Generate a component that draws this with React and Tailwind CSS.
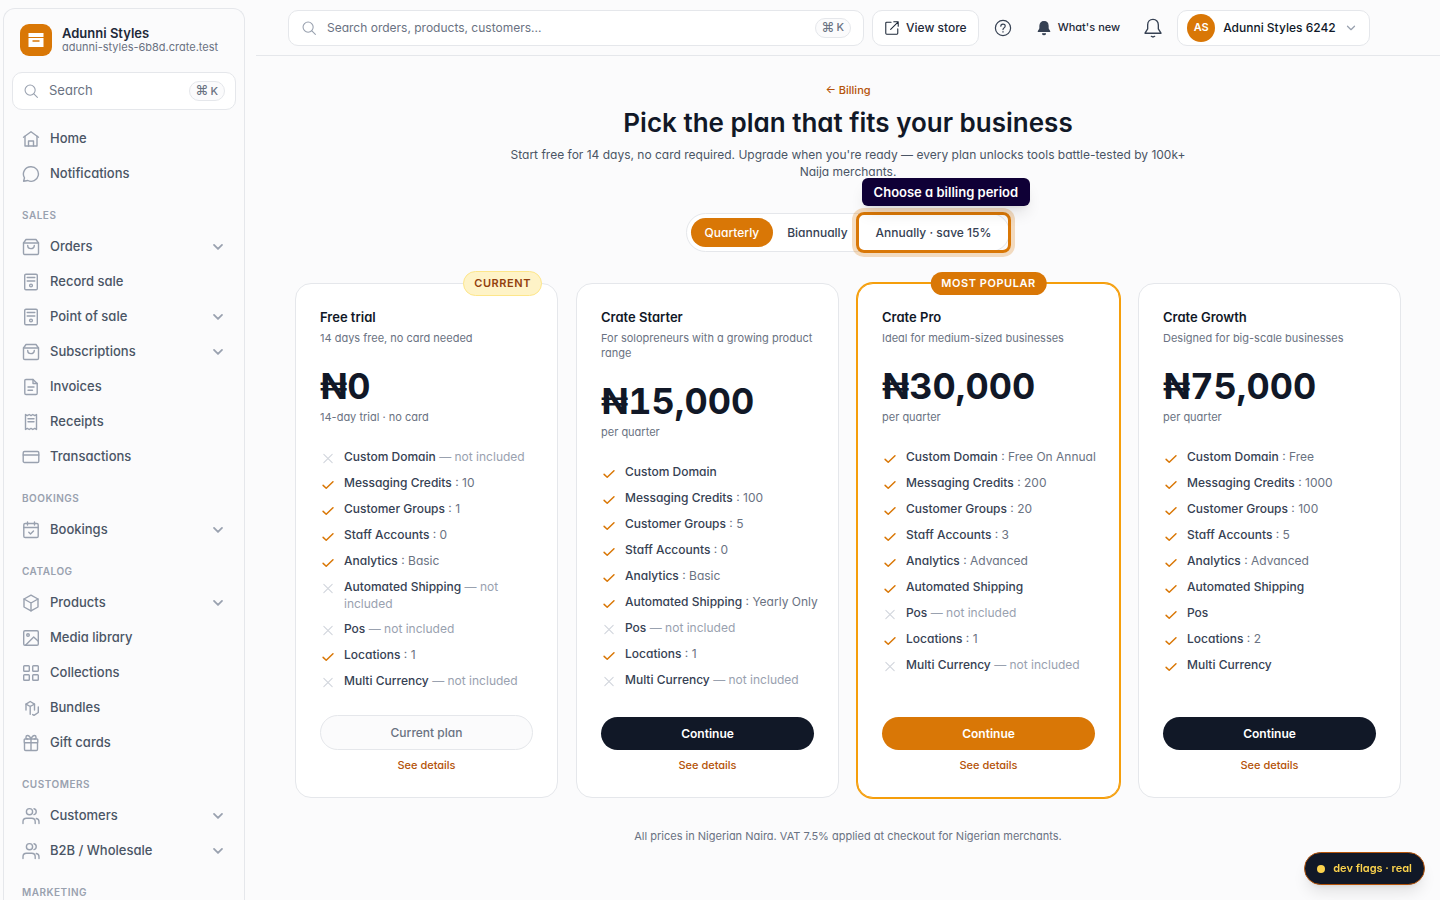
import React, { useState } from 'react'

const paths = {
  home: (
    <>
      <path d="M1.500 7.200 9 1.800l7.500 5.400" />
      <path d="M3 6.200v9.800h12V6.200" />
      <path d="M6.500 16v-5h5v5" />
    </>
  ),
  chat: <path d="M9 1.700a7.300 7.300 0 1 1-3.200 13.800L1.600 16.200l.9-3.400A7.300 7.300 0 0 1 9 1.700Z" />,
  bag: (
    <>
      <path d="M1.500 5v10.200c0 .8.600 1.300 1.300 1.300h12.400c.7 0 1.300-.5 1.300-1.300V5L14 1.500H4L1.500 5Z" />
      <path d="M1.500 5h15" />
      <path d="M5.700 7.500c0 4.200 6.600 4.200 6.600 0" />
    </>
  ),
  pos: (
    <>
      <rect x="2.700" y="1.200" width="12.600" height="15.600" rx="1.300" />
      <path d="M5.200 4.500h7.600M5.200 8h7.600" />
      <circle cx="9" cy="12.500" r="1.400" />
    </>
  ),
  invoice: (
    <>
      <path d="M11 1.500H4c-.7 0-1.200.5-1.200 1.200v12.600c0 .7.500 1.200 1.200 1.200h10c.7 0 1.200-.5 1.200-1.200V5.500L11 1.500Z" />
      <path d="M11 1.500v4h4.200M6 9h6M6 12.200h4.500" />
    </>
  ),
  receipt: (
    <>
      <path d="M3.500 1.500 5.300 2.600 7.200 1.500 9 2.600l1.800-1.100 1.900 1.100 1.800-1.100v15l-1.800-1.100-1.900 1.100L9 15.400l-1.800 1.100-1.900-1.100-1.800 1.100v-15Z" />
      <path d="M6 5.800h6M6 8.800h6" />
    </>
  ),
  card: (
    <>
      <rect x="1.200" y="3.500" width="15.600" height="11" rx="1.300" />
      <path d="M1.200 7h15.600" />
    </>
  ),
  calendar: (
    <>
      <rect x="1.800" y="2.500" width="14.400" height="14" rx="1.300" />
      <path d="M5.500 1v3M12.500 1v3M1.800 6.500h14.400M6.800 11.300l1.700 1.600 3-3" />
    </>
  ),
  box: (
    <>
      <path d="M9 1.200 16 5v8l-7 3.900L2 13V5l7-3.800Z" />
      <path d="M2 5l7 4 7-4M9 9v7.900" />
    </>
  ),
  image: (
    <>
      <rect x="1.700" y="1.700" width="14.600" height="14.600" rx="1.300" />
      <circle cx="6" cy="6" r="1.300" />
      <path d="M3.500 16.200 11.700 8l4.600 4.300" />
    </>
  ),
  grid: (
    <>
      <rect x="1.700" y="1.700" width="5.600" height="5.600" rx=".8" />
      <rect x="10.700" y="1.700" width="5.600" height="5.600" rx=".8" />
      <rect x="1.700" y="10.700" width="5.600" height="5.600" rx=".8" />
      <rect x="10.700" y="10.700" width="5.600" height="5.600" rx=".8" />
    </>
  ),
  bundle: (
    <>
      <path d="M4 11V5.200L8.200 2.500l4.300 2.700V11" />
      <path d="M4 5.200 8.200 7.500l4.300-2.300M8.200 7.500v7.700" />
      <path d="M16.300 8v5.500L12 16.300l-1.300-.7" />
    </>
  ),
  gift: (
    <>
      <rect x="2.200" y="5" width="13.600" height="3.700" rx=".8" />
      <path d="M2.500 8.700v6.600c0 .7.500 1.200 1.200 1.200h10.600c.7 0 1.200-.5 1.200-1.200V8.700M9 5v11.500" />
      <path d="M9 5C8 2.500 6.800 1.500 5.600 1.500 3.500 1.500 3.300 5 5.600 5M9 5c1-2.500 2.200-3.500 3.400-3.500 2.100 0 2.300 3.500 0 3.500" />
    </>
  ),
  users: (
    <>
      <circle cx="7.500" cy="4.700" r="3.100" />
      <path d="M1 16.500v-1.700c0-2 1.500-3.500 3.500-3.500h5.200c2 0 3.500 1.500 3.500 3.500v1.700" />
      <path d="M12 1.800a3 3 0 0 1 0 5.800M14.300 11.500c1.700.3 2.700 1.600 2.700 3.300v1.700" />
    </>
  ),
  search: (
    <>
      <circle cx="8" cy="8" r="5.700" />
      <path d="m12.200 12.200 4 4" />
    </>
  ),
  external: (
    <>
      <path d="M8 2.500H3c-.6 0-1 .4-1 1V15c0 .6.400 1 1 1h11.500c.6 0 1-.4 1-1v-5" />
      <path d="M11 2h5v5M16 2l-8.500 8.500" />
    </>
  ),
  help: (
    <>
      <circle cx="9" cy="9" r="7.600" />
      <path d="M6.800 7.200C6.800 4.300 11.200 4.400 11.200 7c0 1.800-2.200 1.900-2.200 3.600M9 12.500v.6" />
    </>
  ),
  bell: (
    <>
      <path d="M9 1.300c-3 0-4.800 2.200-4.800 5v3.500L1.800 13.700h14.400l-2.400-3.900V6.300c0-2.800-1.800-5-4.800-5Z" />
      <path d="M7.500 16.500c.8.600 2.200.6 3 0" />
    </>
  ),
  bellSolid: (
    <>
      <path fill="currentColor" d="M9 1.800c-3 0-4.600 2-4.600 4.700v3.200L2.500 13h13l-1.900-3.300V6.500c0-2.700-1.600-4.700-4.600-4.700Z" />
      <path fill="currentColor" d="M7.300 15.500c.5 1.300 2.900 1.300 3.400 0Z" />
    </>
  ),
  chevron: <path d="m4.500 6.700 4.500 4.500 4.500-4.500" />,
  check: <path d="m3.500 10.500 3.500 3.300 7.600-7.300" />,
  cross: <path d="m4.300 4.800 9.400 9.400M13.700 4.800l-9.400 9.400" />,
}

const Icon = ({ name, className = 'size-[18px]', stroke = 1.2 }) => (
  <svg
    viewBox="0 0 18 18"
    className={'shrink-0 ' + className}
    fill="none"
    stroke="currentColor"
    strokeWidth={stroke}
    strokeLinecap="round"
    strokeLinejoin="round"
    aria-hidden="true"
  >
    {paths[name]}
  </svg>
)

const navGroups = [
  { items: [{ label: 'Home', icon: 'home' }, { label: 'Notifications', icon: 'chat' }] },
  {
    title: 'Sales',
    items: [
      { label: 'Orders', icon: 'bag', open: true },
      { label: 'Record sale', icon: 'pos' },
      { label: 'Point of sale', icon: 'pos', open: true },
      { label: 'Subscriptions', icon: 'bag', open: true },
      { label: 'Invoices', icon: 'invoice' },
      { label: 'Receipts', icon: 'receipt' },
      { label: 'Transactions', icon: 'card' },
    ],
  },
  { title: 'Bookings', items: [{ label: 'Bookings', icon: 'calendar', open: true }] },
  {
    title: 'Catalog',
    items: [
      { label: 'Products', icon: 'box', open: true },
      { label: 'Media library', icon: 'image' },
      { label: 'Collections', icon: 'grid' },
      { label: 'Bundles', icon: 'bundle' },
      { label: 'Gift cards', icon: 'gift' },
    ],
  },
  {
    title: 'Customers',
    items: [
      { label: 'Customers', icon: 'users', open: true },
      { label: 'B2B / Wholesale', icon: 'users', open: true },
    ],
  },
  { title: 'Marketing', items: [] },
]

// [name, value] - null means not included, '' means included without a value
const plans = [
  {
    name: 'Free trial',
    text: '14 days free, no card needed',
    price: '₦0',
    period: '14-day trial · no card',
    current: true,
    features: [
      ['Custom Domain', null],
      ['Messaging Credits', '10'],
      ['Customer Groups', '1'],
      ['Staff Accounts', '0'],
      ['Analytics', 'Basic'],
      ['Automated Shipping', null],
      ['Pos', null],
      ['Locations', '1'],
      ['Multi Currency', null],
    ],
  },
  {
    name: 'Crate Starter',
    text: 'For solopreneurs with a growing product range',
    price: '₦15,000',
    period: 'per quarter',
    features: [
      ['Custom Domain', ''],
      ['Messaging Credits', '100'],
      ['Customer Groups', '5'],
      ['Staff Accounts', '0'],
      ['Analytics', 'Basic'],
      ['Automated Shipping', 'Yearly Only'],
      ['Pos', null],
      ['Locations', '1'],
      ['Multi Currency', null],
    ],
  },
  {
    name: 'Crate Pro',
    text: 'Ideal for medium-sized businesses',
    price: '₦30,000',
    period: 'per quarter',
    popular: true,
    features: [
      ['Custom Domain', 'Free On Annual'],
      ['Messaging Credits', '200'],
      ['Customer Groups', '20'],
      ['Staff Accounts', '3'],
      ['Analytics', 'Advanced'],
      ['Automated Shipping', ''],
      ['Pos', null],
      ['Locations', '1'],
      ['Multi Currency', null],
    ],
  },
  {
    name: 'Crate Growth',
    text: 'Designed for big-scale businesses',
    price: '₦75,000',
    period: 'per quarter',
    features: [
      ['Custom Domain', 'Free'],
      ['Messaging Credits', '1000'],
      ['Customer Groups', '100'],
      ['Staff Accounts', '5'],
      ['Analytics', 'Advanced'],
      ['Automated Shipping', ''],
      ['Pos', ''],
      ['Locations', '2'],
      ['Multi Currency', ''],
    ],
  },
]

const Shortcut = () => (
  <kbd className="flex h-5 shrink-0 items-center gap-0.5 rounded-full border border-gray-200 bg-[#fbfbfc] px-1.5 font-[inherit] text-[11px] font-medium text-gray-500">
    <span className="text-[13px]">⌘</span>
    <span>K</span>
  </kbd>
)

const Sidebar = () => (
  <aside className="sticky top-0 h-screen w-64 shrink-0 overflow-hidden pt-2 pr-[11px] pl-[3px]">
    <div className="min-h-full rounded-t-xl border-x border-t border-gray-200 px-2">
      <div className="flex items-center gap-2.5 px-2 pt-[15px]">
        <div className="flex size-8 items-center justify-center rounded-[9px] bg-[#d97706]">
          <svg viewBox="0 0 16 16" className="size-4" fill="#fff" aria-hidden="true">
            <path d="M.5 1h15v4H.5zM.5 6h15v9H.5zM4.500 8.200v1.600h7V8.200z" fillRule="evenodd" />
          </svg>
        </div>
        <div>
          <p className="text-[13px] leading-[14px] font-semibold text-gray-800">Adunni Styles</p>
          <p className="text-[11px] leading-[14px] text-gray-500">adunni-styles-6b8d.crate.test</p>
        </div>
      </div>

      <button className="mt-4 flex h-[38px] w-full items-center rounded-[10px] border border-gray-200 bg-white px-2.5 text-[13px] text-gray-500">
        <Icon name="search" className="size-4 text-gray-400" />
        <span className="ml-2.5 flex-1 text-left">Search</span>
        <Shortcut />
      </button>

      <nav className="mt-[11px]">
        {navGroups.map((group, index) => (
          <div key={index}>
            {group.title && (
              <h2 className="flex h-[38px] items-end px-2.5 pb-[7px] text-[10px] leading-[14px] font-semibold tracking-wider text-gray-400 uppercase">
                {group.title}
              </h2>
            )}
            {group.items.map((item) => (
              <a
                key={item.label}
                href="#"
                className="flex h-[35px] items-center gap-2.5 px-2.5 text-[13px] font-medium text-gray-600"
              >
                <Icon name={item.icon} className="size-[18px] text-gray-400" stroke={1.4} />
                <span className="flex-1">{item.label}</span>
                {item.open && <Icon name="chevron" className="size-4 text-gray-400" stroke={2} />}
              </a>
            ))}
          </div>
        ))}
      </nav>
    </div>
  </aside>
)

const Header = () => (
  <header className="flex h-14 items-center gap-2 border-b border-gray-200 pr-[70px] pl-8">
    <label className="flex h-9 w-full max-w-xl items-center rounded-[10px] border border-gray-200 bg-white px-3">
      <Icon name="search" className="size-4 text-gray-400" />
      <input
        type="search"
        aria-label="Search orders, products, customers"
        placeholder="Search orders, products, customers..."
        className="ml-2.5 min-w-0 flex-1 text-[12px] outline-none placeholder:text-gray-500"
      />
      <Shortcut />
    </label>
    <a
      href="#"
      className="flex h-9 shrink-0 items-center gap-1.5 rounded-[10px] border border-gray-200 bg-white px-[11px] text-[12px] font-medium text-gray-800"
    >
      <Icon name="external" className="size-4" />
      View store
    </a>
    <button aria-label="Help" className="flex size-8 shrink-0 items-center justify-center text-gray-700">
      <Icon name="help" />
    </button>
    <button className="flex h-8 shrink-0 items-center gap-1.5 px-[9px] text-[11px] font-medium text-gray-800">
      <Icon name="bellSolid" className="size-4 text-gray-700" />
      What's new
    </button>
    <button aria-label="Alerts" className="flex size-8 shrink-0 items-center justify-center text-gray-700">
      <Icon name="bell" className="size-5" />
    </button>
    <button className="flex h-9 shrink-0 items-center gap-2 rounded-[10px] border border-gray-200 bg-white pr-[11px] pl-[9px] text-[12px] font-medium text-gray-900">
      <span className="flex size-7 items-center justify-center rounded-full bg-[#d97706] text-[11px] font-semibold text-white">
        AS
      </span>
      Adunni Styles 6242
      <Icon name="chevron" className="size-3.5 text-gray-400" stroke={1.6} />
    </button>
  </header>
)

const Feature = ({ name, value }) => (
  <li className="flex items-start gap-2 text-[12px] leading-[17px]">
    {value === null ? (
      <Icon name="cross" className="mt-0.5 size-4 text-gray-300" />
    ) : (
      <Icon name="check" className="mt-0.5 size-4 text-[#d97706]" stroke={1.7} />
    )}
    <p>
      <span className="font-medium text-gray-700">{name}</span>
      {value === null && <span className="text-gray-400"> — not included</span>}
      {value && <span className="text-gray-500"> : {value}</span>}
    </p>
  </li>
)

const PlanCard = ({ plan }) => (
  <article
    className={
      'relative flex flex-col rounded-2xl border bg-white p-6 ' +
      (plan.popular ? 'border-[#f59e0b] ring-1 ring-[#f59e0b]' : 'border-gray-200')
    }
  >
    {plan.current && (
      <span className="absolute -top-[13px] right-[15px] rounded-full border border-[#fde68a] bg-[#fef3c7] px-2.5 py-[3px] text-[11px] leading-[17px] font-semibold tracking-wider text-[#92400e] uppercase">
        Current
      </span>
    )}
    {plan.popular && (
      <span className="absolute -top-3 left-1/2 -translate-x-1/2 rounded-full bg-[#d97706] px-[11px] py-[3px] text-[11px] leading-[17px] font-semibold tracking-wider whitespace-nowrap text-white uppercase">
        Most popular
      </span>
    )}
    <h2 className="text-[13px] leading-[19px] font-semibold text-[#111827]">{plan.name}</h2>
    <p className="mt-1 text-[11px] leading-[15px] text-gray-500">{plan.text}</p>
    <p className="mt-5 text-[36px] leading-10 font-bold text-[#111827] tabular-nums">{plan.price}</p>
    <p className="mt-1 text-[11px] leading-[15px] text-gray-500">{plan.period}</p>
    <ul className="-mr-2 mt-[23px] mb-[25px] flex flex-col gap-2">
      {plan.features.map(([name, value]) => (
        <Feature key={name} name={name} value={value} />
      ))}
    </ul>
    <div className="mt-auto flex flex-col items-center gap-2">
      {plan.current ? (
        <button
          disabled
          className="w-full rounded-full border border-gray-200 bg-[#fbfbfc] py-2 text-[12px] leading-[17px] font-medium text-gray-500"
        >
          Current plan
        </button>
      ) : (
        <button
          className={
            'w-full rounded-full py-2 text-[12px] leading-[17px] font-semibold text-white ' +
            (plan.popular ? 'bg-[#d97706]' : 'bg-[#111827]')
          }
        >
          Continue
        </button>
      )}
      <a href="#" className="text-[11px] leading-[15px] font-medium text-[#b45309]">
        See details
      </a>
    </div>
  </article>
)

const App = () => {
  const [period, setPeriod] = useState('Quarterly')

  const periodClass = (name) =>
    'rounded-full px-3.5 py-1.5 text-[12px] leading-[17px] font-medium ' +
    (period === name ? 'bg-[#d97706] text-white' : 'text-gray-700')

  return (
    <div className="flex min-h-screen bg-[#fbfbfc] font-['Inter',sans-serif] [font-feature-settings:'cv11']">
      <Sidebar />
      <div className="min-w-0 flex-1">
        <Header />
        <main className="mx-auto max-w-[1170px] px-8 pt-[26px] pb-14 text-center">
          <a href="#" className="block text-[11px] leading-4 font-medium text-[#b45309]">
            ← Billing
          </a>
          <h1 className="mt-[9px] text-[26px] leading-8 font-semibold text-[#111827]">
            Pick the plan that fits your business
          </h1>
          <p className="mx-auto mt-[7px] max-w-[690px] text-[12px] leading-[17px] text-gray-600">
            Start free for 14 days, no card required. Upgrade when you're ready — every plan unlocks tools
            battle-tested by 100k+ Naija merchants.
          </p>

          {/* Billing period */}
          <div className="mt-[33px] inline-flex rounded-full border border-gray-200 bg-white p-1">
            <button className={periodClass('Quarterly')} onClick={() => setPeriod('Quarterly')}>
              Quarterly
            </button>
            <button className={periodClass('Biannually')} onClick={() => setPeriod('Biannually')}>
              Biannually
            </button>
            <div className="relative">
              <button className={periodClass('Annually')} onClick={() => setPeriod('Annually')}>
                Annually · save 15%
              </button>
              <span className="pointer-events-none absolute -inset-1.5 rounded-lg border-[3px] border-[#d97706] ring-4 ring-[#d97706]/25" />
              <span
                role="tooltip"
                className="absolute bottom-full left-0 mb-3 rounded-md bg-[#0f0036] px-3 py-1 text-[13px] leading-5 font-semibold whitespace-nowrap text-white shadow-lg"
              >
                Choose a billing period
              </span>
            </div>
          </div>

          <section className="mt-[31px] grid grid-cols-4 gap-[18px] text-left">
            {plans.map((plan) => (
              <PlanCard key={plan.name} plan={plan} />
            ))}
          </section>

          <p className="mt-[31px] text-[11px] leading-[15px] text-gray-500">
            All prices in Nigerian Naira. VAT 7.5% applied at checkout for Nigerian merchants.
          </p>
        </main>
      </div>

      <button className="fixed right-[15px] bottom-[15px] flex h-[33px] items-center gap-2 rounded-full border border-[#b45309] bg-[#111827] px-3 text-[11px] font-semibold text-[#fcd34d] shadow-lg">
        <span className="size-2 rounded-full bg-[#fcd34d]" />
        dev flags · real
      </button>
    </div>
  )
}

export default App
